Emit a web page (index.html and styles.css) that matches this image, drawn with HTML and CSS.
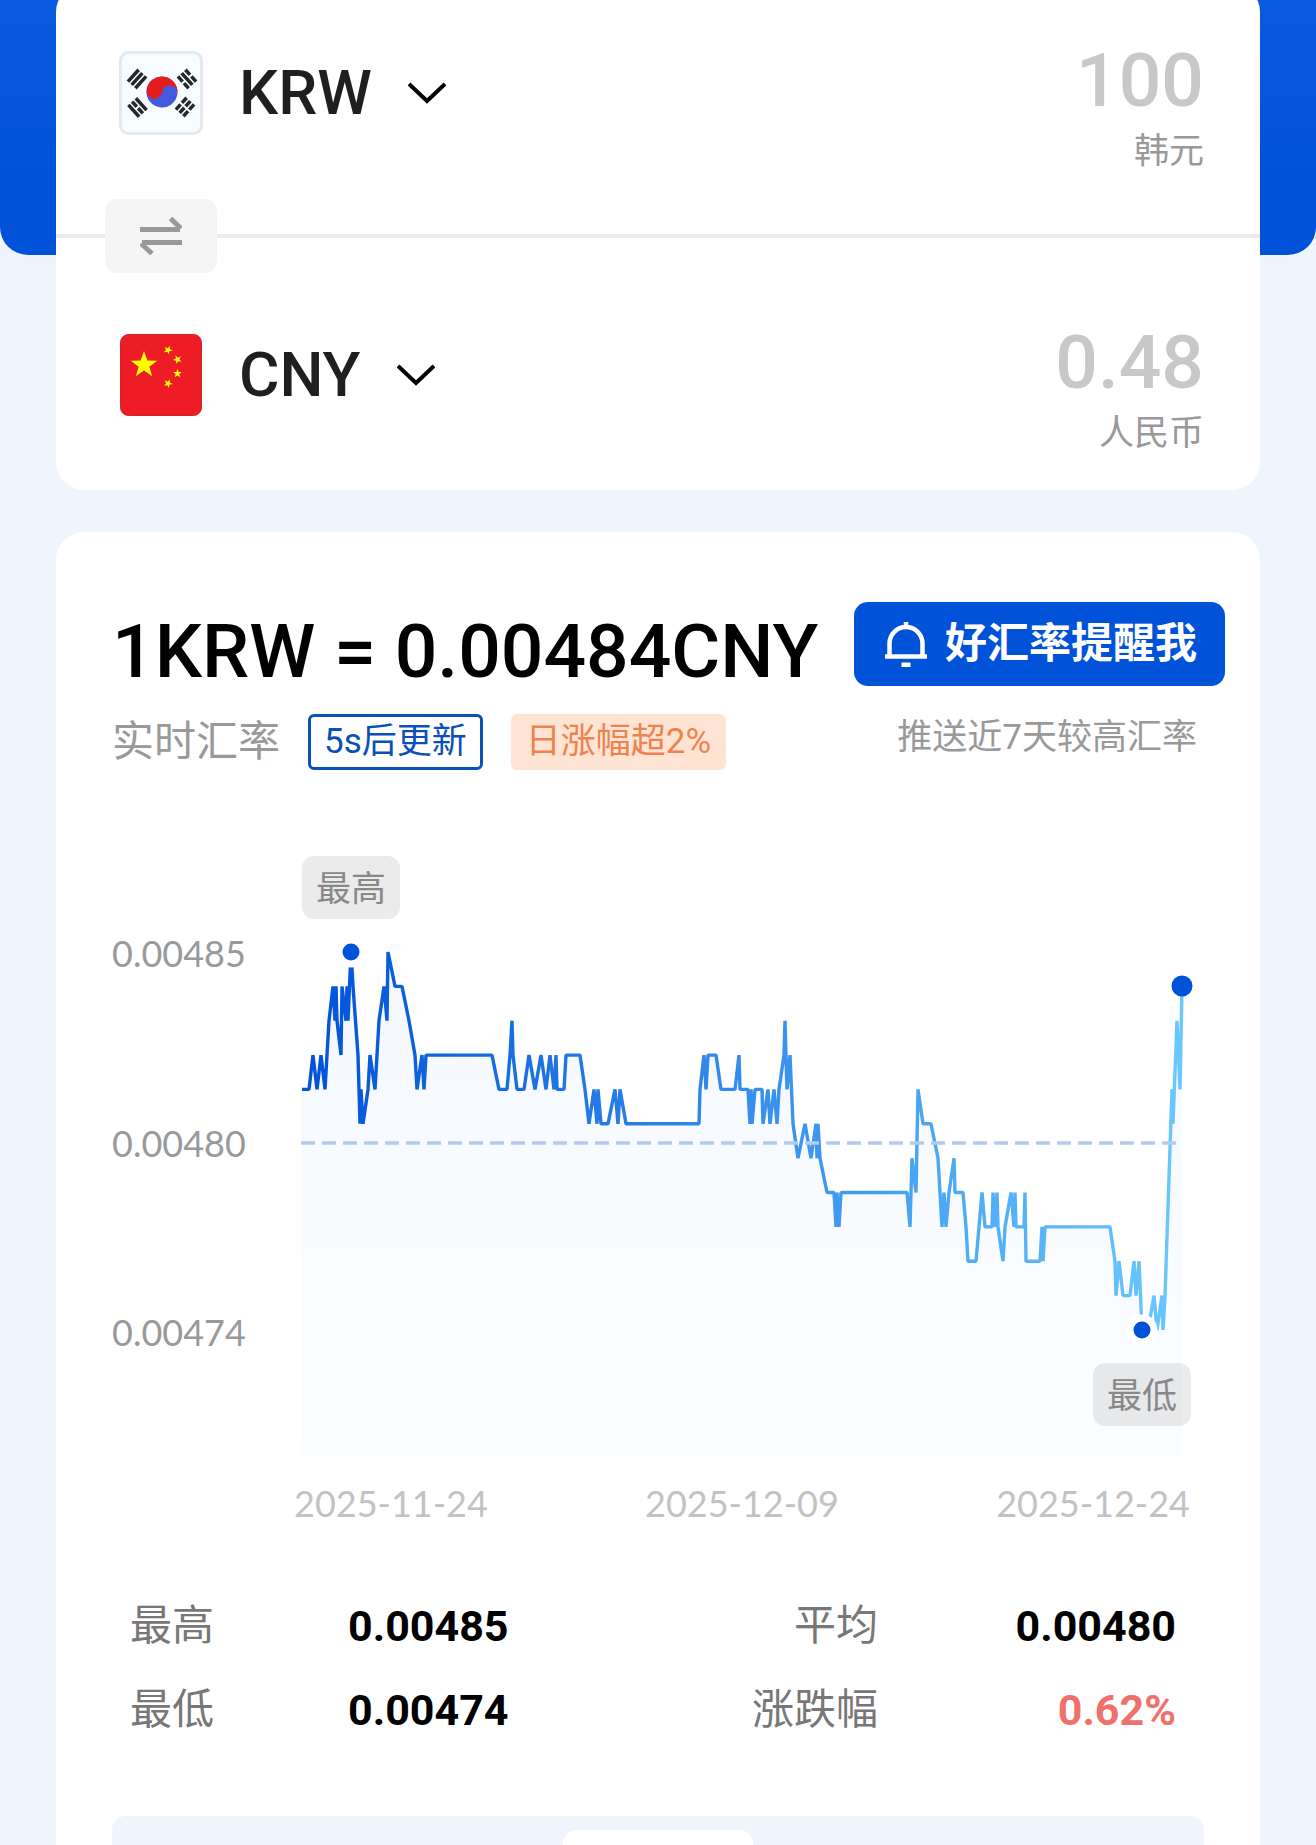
FILE: index.html
```html
<!DOCTYPE html>
<html lang="zh-CN">
  <head>
    <meta charset="utf-8">
    <meta name="viewport" content="width=device-width, initial-scale=1">
    <title>汇率换算</title>
    <link rel="stylesheet" href="styles.css">
  </head>
  <body>
    <header class="hero"></header>
    <main>
      <section class="card converter">
        <div class="row row-from">
          <div class="currency">
            <svg class="flag" viewBox="0 0 84 84" aria-hidden="true">
              <rect x="1.500" y="1.500" width="81" height="81" rx="8" fill="#f6fcff" stroke="#e4e9ed" stroke-width="3"/>
              <g transform="rotate(8 43 41)">
                <circle cx="43" cy="41" r="15.5" fill="#425adb"/>
                <path d="M27.5 41A15.5 15.5 0 0 1 58.5 41A7.75 7.75 0 0 0 43 41A7.75 7.75 0 0 1 27.5 41Z" fill="#e31d1c"/>
              </g>
              <g stroke="#272727" stroke-width="3.500">
                <path transform="translate(18 28) rotate(-48)" d="M-8-5H8M-8 0H8M-8 5H8"/>
                <path transform="translate(68 28) rotate(48)" d="M-8-5H-1M1-5H8M-8 0H8M-8 5H-1M1 5H8"/>
                <path transform="translate(18.500 56.500) rotate(48)" d="M-8-5H8M-8 0H-1M1 0H8M-8 5H8"/>
                <path transform="translate(66 56) rotate(-48)" d="M-8-5H-1M1-5H8M-8 0H-1M1 0H8M-8 5H-1M1 5H8"/>
              </g>
            </svg>
            <select class="code" aria-label="持有货币">
              <option>KRW</option>
            </select>
            <svg class="chevron" viewBox="0 0 38 22" aria-hidden="true"><path d="M1 2L19 19L37 2"/></svg>
          </div>
          <div class="amount">
            <input type="text" id="from" placeholder="100" inputmode="decimal">
            <label for="from">韩元</label>
          </div>
        </div>
        <div class="divider">
          <button type="button" class="swap" aria-label="交换货币">
            <svg width="42" height="38" viewBox="0 0 42 38"><path d="M0 12.5H40M30.500 1.500L41 11.500M42 25.500H2M1 26.500L12 36.500" fill="none" stroke="#999" stroke-width="5"/></svg>
          </button>
        </div>
        <div class="row row-to">
          <div class="currency">
            <svg class="flag" viewBox="0 0 84 84" aria-hidden="true">
              <defs>
                <polygon id="star" points="0,-10 2.35,-3.24 9.51,-3.09 3.8,1.24 5.88,8.09 0,4 -5.88,8.09 -3.8,1.24 -9.51,-3.09 -2.35,-3.24"/>
              </defs>
              <rect x="1.500" y="1.500" width="81" height="81" rx="8" fill="#ee1c25" stroke="#c9252f"/>
              <g fill="#ff0">
                <use href="#star" transform="translate(25 32) scale(1.4)"/>
                <use href="#star" transform="translate(49 17) rotate(25) scale(.47)"/>
                <use href="#star" transform="translate(58.500 26.500) rotate(48) scale(.47)"/>
                <use href="#star" transform="translate(58.500 40.500) rotate(0) scale(.47)"/>
                <use href="#star" transform="translate(49 50.500) rotate(25) scale(.47)"/>
              </g>
            </svg>
            <select class="code" aria-label="目标货币">
              <option>CNY</option>
            </select>
            <svg class="chevron" viewBox="0 0 38 22" aria-hidden="true"><path d="M1 2L19 19L37 2"/></svg>
          </div>
          <div class="amount">
            <input type="text" id="to" placeholder="0.48" inputmode="decimal">
            <label for="to">人民币</label>
          </div>
        </div>
      </section>

      <section class="card rate">
        <div class="rate-head">
          <div>
            <h1>1KRW = 0.00484CNY</h1>
            <div class="tags">
              <span class="live">实时汇率</span>
              <span class="tag tag-blue">5s后更新</span>
              <span class="tag tag-orange">日涨幅超2%</span>
            </div>
          </div>
          <div class="remind">
            <button type="button" class="remind-btn">
              <svg width="42" height="45" viewBox="0 0 42 45" fill="none" stroke="#fff" stroke-width="4.500"><path d="M4.500 34V21.500a16.500 16.500 0 0 1 33 0V34M0 34.500H42M21 0V6M16.500 42.700H25.500"/></svg>
              <span>好汇率提醒我</span>
            </button>
            <p>推送近7天较高汇率</p>
          </div>
        </div>

        <div class="chart">
          <div class="y-axis">
            <span>0.00485</span>
            <span>0.00480</span>
            <span>0.00474</span>
          </div>
          <div class="plot">
            <svg viewBox="0 0 880 601" aria-label="近30天汇率走势">
              <defs>
                <linearGradient id="lineFill" gradientUnits="userSpaceOnUse" x1="0" y1="0" x2="880" y2="0">
                  <stop offset="0" stop-color="#0052d9"/>
                  <stop offset="1" stop-color="#69c8ff"/>
                </linearGradient>
                <linearGradient id="areaFill" x1="0" y1="0" x2="0" y2="1">
                  <stop offset="0" stop-color="#f4f8fd"/>
                  <stop offset="1" stop-color="#fcfdff"/>
                </linearGradient>
              </defs>
              <path id="area" fill="url(#areaFill)"/>
              <path id="line" fill="none" stroke="url(#lineFill)" stroke-width="3.400" stroke-linejoin="bevel"/>
              <path d="M-1 287H875" stroke="#b3caf0" stroke-width="3.500" stroke-dasharray="14 7"/>
              <circle class="dot" cx="49" cy="96" r="12"/>
              <circle class="dot" cx="840" cy="474" r="12"/>
              <circle cx="880" cy="130" r="10.500" fill="#0052d9"/>
            </svg>
            <span class="chip chip-high">最高</span>
            <span class="chip chip-low">最低</span>
            <div class="x-axis">
              <span>2025-11-24</span>
              <span>2025-12-09</span>
              <span>2025-12-24</span>
            </div>
          </div>
        </div>

        <dl class="stats">
          <dt>最高</dt><dd>0.00485</dd>
          <dt class="right">平均</dt><dd class="right">0.00480</dd>
          <dt>最低</dt><dd>0.00474</dd>
          <dt class="right">涨跌幅</dt><dd class="right up">0.62%</dd>
        </dl>

        <div class="range">
          <div class="range-active"></div>
        </div>
      </section>
    </main>
    <script src="chart.js"></script>
  </body>
</html>
```

FILE: styles.css
```css
* {
  box-sizing: border-box;
}

body {
  margin: 0;
  min-height: 100vh;
  background: #f0f4fc;
  font-family: Roboto, "Noto Sans CJK SC", sans-serif;
  color: #000;
}

.hero {
  height: 255px;
  border-radius: 0 0 28px 28px;
  background: linear-gradient(#0a5ae0, #0052d9 70%);
}

main {
  margin-top: -271px;
  padding: 0 56px;
}

.card {
  background: #fff;
  border-radius: 28px;
}

/* converter */
.row {
  display: flex;
  justify-content: space-between;
  align-items: flex-start;
}

.row-from {
  padding: 52px 56px 54px 63px;
}

.row-to {
  padding: 80px 56px 28px 63px;
}

.currency {
  display: flex;
  align-items: center;
  height: 84px;
  margin-top: 15px;
}

.flag {
  width: 84px;
  height: 84px;
  margin-right: 36px;
}

.code {
  appearance: none;
  border: 0;
  padding: 0;
  background: none;
  font: 500 62px/84px Roboto, sans-serif;
  color: #1f1f1f;
}

.chevron {
  width: 38px;
  height: 22px;
  margin-left: 36px;
  fill: none;
  stroke: #000;
  stroke-width: 4;
}

.amount {
  display: flex;
  flex-direction: column;
  flex: 1;
  min-width: 0;
  text-align: right;
}

.amount input {
  width: 100%;
  height: 88px;
  border: 0;
  padding: 0;
  background: none;
  text-align: right;
  font: 500 75px/88px Roboto, sans-serif;
}

.amount input::placeholder {
  color: #c8c8c8;
}

.amount label {
  font-size: 35px;
  line-height: 56px;
  color: #999;
}

.divider {
  position: relative;
  height: 4px;
  background: #ebebeb;
}

.swap {
  position: absolute;
  top: -35px;
  left: 49px;
  display: flex;
  align-items: center;
  justify-content: center;
  width: 112px;
  height: 74px;
  border: 0;
  border-radius: 12px;
  background: #f5f5f5;
}

/* rate card */
.rate {
  margin-top: 42px;
  padding: 70px 0 0 56px;
  border-radius: 28px 28px 0 0;
}

.rate-head {
  display: flex;
  justify-content: space-between;
  padding-right: 35px;
}

h1 {
  margin: 0;
  font-size: 75px;
  font-weight: 500;
  line-height: 98px;
  white-space: nowrap;
}

.tags {
  display: flex;
  align-items: center;
  margin-top: 14px;
  gap: 28px;
}

.live {
  font-size: 42px;
  line-height: 48px;
  color: #999;
}

.tag {
  height: 56px;
  padding: 0 15px;
  border-radius: 6px;
  font-size: 35px;
  line-height: 56px;
}

.tag-blue {
  padding: 0 13px;
  border: 3px solid #0b4fb8;
  line-height: 50px;
  color: #0b4fb8;
}

.tag-orange {
  background: #ffe4d3;
  color: #ee8350;
}

.remind-btn {
  display: flex;
  align-items: center;
  gap: 18px;
  height: 84px;
  padding: 0 28px 0 31px;
  border: 0;
  border-radius: 14px;
  background: #0052d9;
  color: #fff;
  font: 700 42px/60px "Noto Sans CJK SC", sans-serif;
  white-space: nowrap;
}

.remind-btn span {
  padding-bottom: 8px;
}

.remind p {
  margin: 26px 28px 0 0;
  font-size: 35px;
  line-height: 52px;
  text-align: right;
  color: #999;
}

.chart {
  display: flex;
  margin-top: 86px;
  padding-right: 78px;
}

.y-axis {
  display: flex;
  flex-direction: column;
  justify-content: space-between;
  width: 190px;
  padding: 73px 0 171px;
  font-family: Lato, sans-serif;
  font-size: 36px;
  line-height: 48px;
  color: #999;
}

.plot {
  position: relative;
  flex: 1;
}

.plot svg {
  display: block;
  width: 100%;
  overflow: visible;
}

.dot {
  fill: #0052d9;
  stroke: #fff;
  stroke-width: 7;
}

.chip {
  position: absolute;
  height: 63px;
  padding: 4px 14px 0;
  border-radius: 12px;
  background: rgba(0, 0, 0, 0.08);
  font-size: 35px;
  line-height: 60px;
  color: #888;
}

.chip-high {
  top: 0;
  left: 0;
}

.chip-low {
  bottom: 101px;
  right: -9px;
}

.x-axis {
  display: flex;
  justify-content: space-between;
  margin: 22px -8px 0;
  font-family: Lato, sans-serif;
  font-size: 36px;
  line-height: 48px;
  color: #c2c2c2;
}

.stats {
  display: grid;
  grid-template-columns: 218px 1fr 1fr 298px;
  margin: 57px 84px 0 18px;
  font-size: 42px;
  line-height: 84px;
}

.stats dt {
  color: #777;
}

.stats dd {
  margin: 0;
  font-size: 43px;
  font-weight: 700;
}

.stats .right {
  text-align: right;
}

.stats .up {
  color: #f0716b;
}

.range {
  display: flex;
  justify-content: center;
  margin: 64px 56px 0 0;
  padding-top: 14px;
  border-radius: 14px 14px 0 0;
  background: #f0f4fc;
}

.range-active {
  width: 190px;
  height: 15px;
  border-radius: 14px 14px 0 0;
  background: #fff;
}
```

FILE: chart.js
```js
// [x, steps below the highest rate]
var points = [
  [0,4],[7,4],[11,3],[15,4],[19,3],[23,4],[27,2],[31,1],[33,2],[34,1],[35,2],[39,3],[40,1],[44,2],[45,1],[46,2],
  [49,0],[51,1],[56,3],[58,5],[59,4],[61,5],[66,4],[68,3],[73,4],[77,2],[82,1],[85,2],[86,0],[93,1],[100,1],
  [107,2],[113,3],[115,4],[120,3],[122,4],[124,3],[190,3],[197,4],[205,4],[208,3],[210,2],[211,3],[215,4],
  [222,4],[227,3],[233,4],[239,3],[244,4],[248,3],[252,4],[254,3],[255,4],[262,4],[264,3],[278,3],[283,4],
  [287,5],[292,4],[295,5],[296,4],[299,5],[306,5],[313,4],[316,5],[318,4],[324,5],[397,5],[398,4],[402,3],
  [404,4],[406,3],[414,3],[419,4],[433,4],[437,3],[438,4],[446,4],[448,5],[449,4],[450,5],[453,4],[460,4],
  [461,5],[466,4],[468,5],[472,4],[475,5],[477,4],[482,3],[483,2],[485,4],[488,3],[491,5],[496,6],[503,5],
  [509,6],[514,5],[515,6],[516,5],[518,6],[525,7],[532,7],[534,8],[535,7],[537,8],[539,7],[605,7],[608,8],
  [610,6],[614,7],[616,4],[621,5],[629,5],[636,6],[640,8],[642,7],[644,8],[647,7],[652,6],[653,7],[661,7],
  [664,8],[666,9],[674,9],[677,8],[680,7],[683,8],[690,8],[691,7],[693,8],[695,7],[696,8],[701,9],[703,8],
  [709,7],[712,8],[713,7],[714,8],[722,8],[723,7],[724,9],[738,9],[740,8],[741,9],[743,8],[808,8],[813,9],
  [814,10],[817,9],[821,10],[828,10],[832,9],[834,10],[837,9],[840,11],[846,11],[852,10],[855,11],[860,10],
  [861,11],[863,10],[870,4],[871,5],[875,2],[878,4],[880,1]
];

var top0 = 96;
var step = 34.36;
var d = points.map(function (p) {
  return p[0] + " " + (top0 + p[1] * step).toFixed(1);
}).join("L");

document.getElementById("line").setAttribute("d", "M" + d);
document.getElementById("area").setAttribute("d", "M0 601L" + d + "V601Z");
```
